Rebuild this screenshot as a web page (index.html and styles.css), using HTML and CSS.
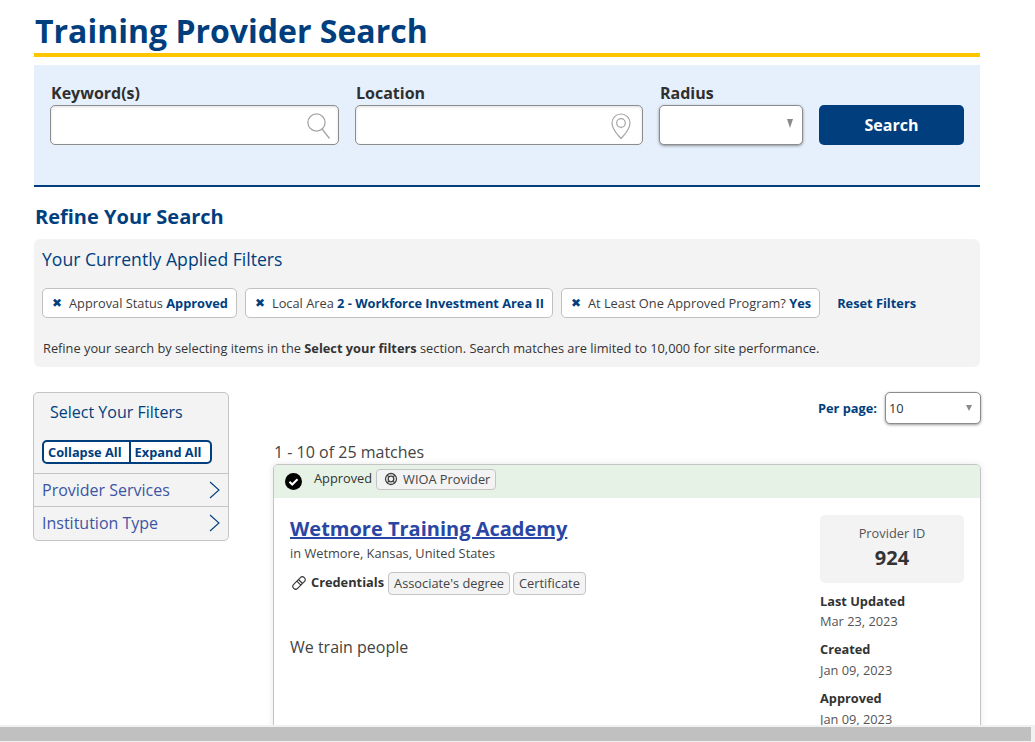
FILE: index.html
```html
<!DOCTYPE html>
<html lang="en">
<head>
<meta charset="utf-8">
<title>Training Provider Search</title>
<link rel="stylesheet" href="styles.css">
</head>
<body>
<div class="viewport">
  <div class="page">
    <h1 class="title">Training Provider Search</h1>
    <form class="search">
      <div class="field field-wide">
        <label class="field-label">Keyword(s)</label>
        <div class="input">
          <svg class="input-icon" width="23" height="28" viewBox="0 0 23 28" fill="none" stroke="#a5a5a5" stroke-width="1.3"><circle cx="9.500" cy="11.500" r="8.600"/><path d="M15 18l7.500 9.500"/></svg>
        </div>
      </div>
      <div class="field field-wide">
        <label class="field-label">Location</label>
        <div class="input">
          <svg class="input-icon icon-pin" width="20" height="28" viewBox="0 0 20 28" fill="none" stroke="#a5a5a5" stroke-width="1.200"><path d="M10 27.500C6 23 1 18.500 1 12a9 9 0 0 1 18 0c0 6.500-5 11-9 15.500z"/><circle cx="10" cy="12" r="4.300"/></svg>
        </div>
      </div>
      <div class="field field-radius">
        <label class="field-label">Radius</label>
        <div class="select select-lg"><span class="caret"></span></div>
      </div>
      <button class="search-btn" type="button">Search</button>
    </form>

    <h2 class="refine">Refine Your Search</h2>
    <section class="applied">
      <h3 class="applied-title">Your Currently Applied Filters</h3>
      <div class="chips">
        <span class="chip"><b class="x">✖</b><span>Approval Status <b>Approved</b></span></span>
        <span class="chip"><b class="x">✖</b><span>Local Area <b>2 - Workforce Investment Area II</b></span></span>
        <span class="chip"><b class="x">✖</b><span>At Least One Approved Program? <b>Yes</b></span></span>
        <a class="reset">Reset Filters</a>
      </div>
      <p class="hint">Refine your search by selecting items in the <b>Select your filters</b> section. Search matches are limited to 10,000 for site performance.</p>
    </section>

    <div class="main">
      <aside class="sidebar">
        <div class="sidebar-title">Select Your Filters</div>
        <div class="toggle"><span class="toggle-btn">Collapse All</span><span class="toggle-btn">Expand All</span></div>
        <div class="facet">Provider Services<svg width="11" height="18" viewBox="0 0 11 18" fill="none" stroke="#003e7e" stroke-width="1.100"><path d="M1 1l9 8-9 8"/></svg></div>
        <div class="facet">Institution Type<svg width="11" height="18" viewBox="0 0 11 18" fill="none" stroke="#003e7e" stroke-width="1.100"><path d="M1 1l9 8-9 8"/></svg></div>
      </aside>
      <div class="results">
        <div class="perpage"><span class="perpage-label">Per page:</span><div class="select select-sm">10<span class="caret caret-sm"></span></div></div>
        <div class="count">1 - 10 of 25 matches</div>
        <article class="card">
          <div class="card-status">
            <svg class="check" width="17" height="17" viewBox="0 0 16 16"><circle cx="8" cy="8" r="8" fill="#000"/><path d="M4.200 8.300l2.600 2.500 5-5" fill="none" stroke="#fff" stroke-width="2"/></svg>
            <span class="status-text">Approved</span>
            <span class="tag tag-wioa"><svg width="14" height="14" viewBox="0 0 14 14" fill="none" stroke="#444"><circle cx="7" cy="7" r="5.500" stroke-width="1.300"/><circle cx="7" cy="7" r="2.800" stroke-width="1.300"/><path d="M3 3l2 2M11 3L9 5M3 11l2-2M11 11L9 9" stroke-width="1.200"/></svg>WIOA Provider</span>
          </div>
          <div class="card-body">
            <div class="card-main">
              <a class="card-title">Wetmore Training Academy</a>
              <div class="card-loc">in Wetmore, Kansas, United States</div>
              <div class="creds">
                <svg width="14" height="14" viewBox="0 0 14 14" fill="none" stroke="#333" stroke-width="1.100"><rect x="-0.500" y="4.200" width="15" height="5.600" rx="2.800" transform="rotate(-45 7 7)"/><path d="M6.500 3.500l4 4M4.800 5.200l4 4"/></svg>
                <b class="creds-label">Credentials</b>
                <span class="tag">Associate's degree</span>
                <span class="tag">Certificate</span>
              </div>
              <p class="desc">We train people</p>
            </div>
            <div class="card-side">
              <div class="idbox"><div class="id-label">Provider ID</div><div class="id-num">924</div></div>
              <div class="meta-label">Last Updated</div><div class="meta-val">Mar 23, 2023</div>
              <div class="meta-label">Created</div><div class="meta-val">Jan 09, 2023</div>
              <div class="meta-label">Approved</div><div class="meta-val">Jan 09, 2023</div>
            </div>
          </div>
        </article>
      </div>
    </div>
  </div>
</div>
<div class="hscroll"><div class="hscroll-thumb"></div></div>
</body>
</html>
```

FILE: styles.css
```css
* { box-sizing: border-box; }
html, body { margin: 0; height: 742px; overflow: hidden; }
body { display: flex; flex-direction: column; background: #fff; color: #333; font-family: "Open Sans", "Liberation Sans", sans-serif; }
.viewport { height: 725px; overflow: hidden; }
.page { width: 946px; margin-left: 34px; padding-top: 9px; }
.title { margin: 0; height: 48px; border-bottom: 4px solid #ffc600; font-size: 32px; line-height: 44px; font-weight: 700; color: #003e7e; padding-left: 1px; }
.search { margin-top: 8px; height: 122px; background: #e6f0fc; border-bottom: 2px solid #003e7e; padding: 18px 16px 0; display: flex; align-items: flex-start; gap: 16px; }
.field-wide { width: 289px; }
.field-wide + .field-wide { width: 288px; }
.field-radius { width: 144px; }
.field-label { display: block; height: 22px; font-size: 16px; line-height: 20px; font-weight: 700; color: #2f2f2f; padding-left: 1px; }
.input { height: 40px; background: #fff; border: 1px solid #8c8c8c; border-radius: 5px; box-shadow: inset 0 1px 3px rgba(0,0,0,.12); display: flex; align-items: center; justify-content: flex-end; padding-right: 8px; }
.input-icon { display: block; }
.icon-pin { margin-right: 3px; }
.select { position: relative; background: #fff; border: 1px solid #8c8c8c; border-radius: 5px; box-shadow: 0 1px 3px rgba(0,0,0,.4); }
.select-lg { height: 40px; }
.caret { position: absolute; right: 9px; top: 13px; width: 0; height: 0; border-left: 3.500px solid transparent; border-right: 3.500px solid transparent; border-top: 9px solid #8a8a8a; }
.search-btn { width: 145px; height: 40px; margin-top: 22px; border: 0; border-radius: 5px; background: #003e7e; color: #fff; font: 700 16px "Open Sans", "Liberation Sans", sans-serif; }
.refine { margin: 16px 0 0 1px; height: 36px; font-size: 20px; line-height: 27px; font-weight: 700; color: #003e7e; }
.applied { height: 128px; background: #f3f3f3; border-radius: 6px; padding: 7px 8px 0; }
.applied-title { margin: 0; font-size: 17.600px; line-height: 26px; font-weight: 400; color: #003e7e; }
.chips { margin-top: 16px; display: flex; align-items: center; gap: 8px; height: 30px; }
.chip { height: 30px; display: flex; align-items: center; padding: 0 8px; background: #fff; border: 1px solid #c0c0c0; border-radius: 5px; font-size: 12.800px; color: #3d3d3d; }
.chip b { color: #003e7e; font-weight: 700; }
.chip .x { width: 12px; font-family: "DejaVu Sans", sans-serif; font-size: 12px; margin-right: 5px; margin-left: 1px; }
.reset { margin-left: 9px; font-size: 12.800px; font-weight: 700; color: #003e7e; }
.hint { margin: 21px 0 0 1px; font-size: 12.800px; line-height: 18px; color: #333; }
.hint b { font-weight: 700; }
.main { display: flex; align-items: flex-start; margin-top: 25px; margin-left: -1px; margin-right: -1px; }
.sidebar { width: 196px; background: #f3f3f3; border: 1px solid #c4c4c4; border-radius: 5px; padding-bottom: 1px; }
.sidebar-title { padding: 8px 16px 0; height: 47px; font-size: 16px; line-height: 22px; color: #003e7e; }
.toggle { display: flex; width: 170px; height: 24px; margin-left: 8px; background: #fff; border: 2px solid #003e7e; border-radius: 5px; }
.toggle-btn { font-size: 12.800px; line-height: 20px; font-weight: 700; color: #003e7e; padding: 0 7px 0 4px; white-space: nowrap; }
.toggle-btn + .toggle-btn { border-left: 2px solid #003e7e; padding-right: 0; }
.facet { height: 33px; border-top: 1px solid #c4c4c4; padding: 0 8px; display: flex; align-items: center; justify-content: space-between; font-size: 16px; color: #3c55a5; }
.toggle + .facet { margin-top: 9px; }
.results { width: 708px; margin-left: 44px; }
.perpage { display: flex; justify-content: flex-end; align-items: center; gap: 8px; height: 32px; }
.perpage-label { font-size: 12.800px; font-weight: 700; color: #003e7e; }
.select-sm { width: 96px; height: 32px; padding-left: 3px; font-size: 12.800px; line-height: 30px; color: #333; }
.caret-sm { right: 8px; top: 12px; border-left-width: 3px; border-right-width: 3px; border-top-width: 6px; }
.count { margin-top: 17px; height: 23px; margin-left: 1px; font-size: 16px; line-height: 22px; color: #444; }
.card { height: 400px; background: #fff; border: 1px solid #c4c4c4; border-radius: 5px; box-shadow: 0 0 6px rgba(0,0,0,.1); overflow: hidden; }
.card-status { height: 33px; background: #e6f2e6; display: flex; align-items: flex-start; padding: 0 0 0 11px; font-size: 12.800px; }
.check { margin-top: 8px; }
.status-text { margin-left: 12px; margin-top: 4px; line-height: 18px; color: #333; }
.tag { display: inline-flex; align-items: center; height: 23px; padding: 0 5px; background: #f3f3f3; border: 1px solid #c4c4c4; border-radius: 4px; font-size: 12.800px; color: #444; }
.tag-wioa { margin-left: 4px; margin-top: 4px; height: 21px; gap: 5px; padding: 0 5px 2px 7px; }
.card-body { display: flex; justify-content: space-between; padding: 17px 16px 0 16px; }
.card-title { display: block; font-size: 20px; line-height: 28px; font-weight: 700; color: #2a46a5; text-decoration: underline; }
.card-loc { font-size: 12.800px; line-height: 20px; color: #444; }
.creds { display: flex; align-items: center; margin-top: 8px; margin-left: 2px; height: 24px; }
.creds-label { margin-left: 5px; margin-right: 4px; margin-bottom: 2px; font-size: 12.800px; font-weight: 700; color: #333; }
.creds .tag { margin-right: 3px; }
.desc { margin: 41px 0 0; font-size: 16px; line-height: 22px; color: #444; }
.card-side { width: 144px; }
.idbox { height: 68px; background: #f3f3f3; border-radius: 5px; text-align: center; padding-top: 9px; }
.id-label { font-size: 12.800px; line-height: 18px; color: #555; }
.id-num { margin-top: 2px; font-size: 20px; line-height: 27px; font-weight: 700; color: #333; }
.meta-label { font-size: 12.800px; line-height: 20px; font-weight: 700; color: #333; margin-top: 8px; }
.meta-val + .meta-label { margin-top: 8px; margin-bottom: 1px; }
.meta-val { font-size: 12.800px; line-height: 20px; color: #555; }
.hscroll { height: 17px; background: #f1f1f1; padding: 2px 4px 1px 0; }
.hscroll-thumb { height: 14px; background: #c0c0c0; }
```
